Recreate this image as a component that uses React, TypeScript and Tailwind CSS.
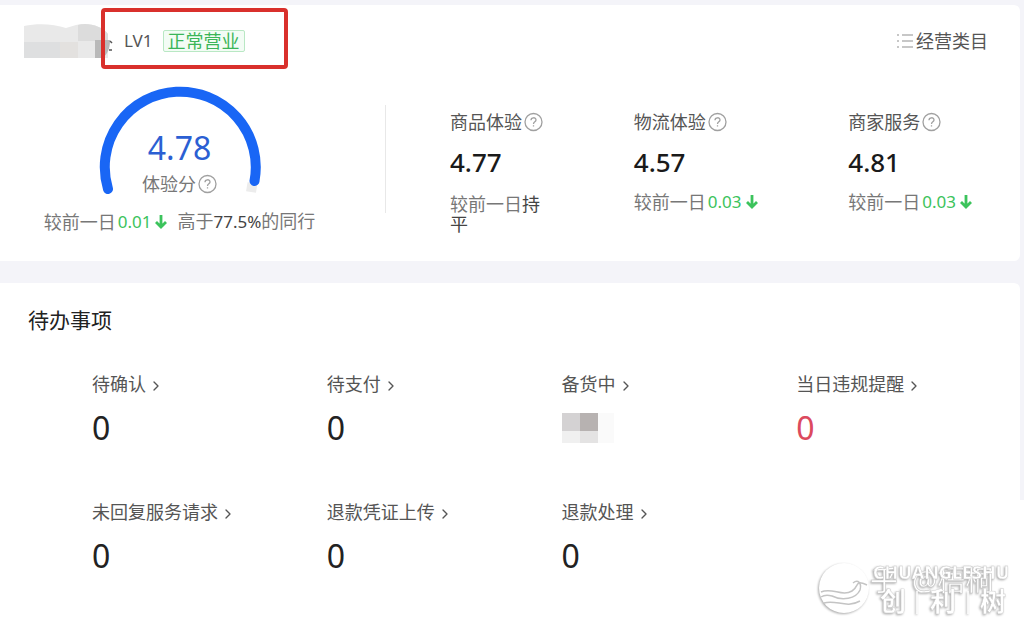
import { clsx } from "clsx"
import { ChevronRight } from "lucide-react"

type Metric = {
  label: string
  score: string
  drop?: string
}

type Todo = {
  label: string
  count: string | null
  alert?: boolean
}

const metrics: Metric[] = [
  { label: "商品体验", score: "4.77" },
  { label: "物流体验", score: "4.57", drop: "0.03" },
  { label: "商家服务", score: "4.81", drop: "0.03" },
]

// a null count is drawn as a masked value
const todos: Todo[] = [
  { label: "待确认", count: "0" },
  { label: "待支付", count: "0" },
  { label: "备货中", count: null },
  { label: "当日违规提醒", count: "0", alert: true },
  { label: "未回复服务请求", count: "0" },
  { label: "退款凭证上传", count: "0" },
  { label: "退款处理", count: "0" },
]

function Help({ label }: { label: string }) {
  return (
    <button type="button" aria-label={`${label}说明`} className="text-[#a0a0a0]">
      <svg viewBox="0 0 20 20" className="w-5 h-5" fill="none" stroke="currentColor" strokeWidth="1.3">
        <circle cx="10.500" cy="10" r="8.500" />
        <path d="M8 8.200C8 5 13 5 13 8C13 9.800 10.500 9.800 10.500 12M10.500 13.300V14.600" />
      </svg>
    </button>
  )
}

function Drop({ value }: { value: string }) {
  return (
    <span className="inline-flex items-center gap-1 ml-[2px] text-[17px] text-[#3cc35c]">
      {value}
      <svg viewBox="0 0 12 16" className="w-3 h-4" fill="none" stroke="currentColor" strokeWidth="2.800">
        <path d="M6 1V13M1 8L6 13L11 8" />
      </svg>
    </span>
  )
}

function NameMask() {
  return (
    <svg viewBox="0 0 90 34" aria-hidden="true" className="w-[90px] h-[34px]">
      <path d="M0 2C14 -1 30 0 42 4L52 1C64 -2 78 2 84 10V34H0Z" fill="#e9e9e9" />
      <path d="M0 18H36V34H0Z" fill="#dedfe0" />
      <path d="M36 18H54V34H36Z" fill="#e3e1df" />
      <path d="M54 1C64 -2 78 2 84 10V17H54Z" fill="#dcdcdc" />
      <path d="M71 16H86C86 24 84 30 78 34H71Z" fill="#b9b9b9" />
      <path d="M86 17L88 19M85 26H88" stroke="#555" strokeWidth="1.500" />
    </svg>
  )
}

function ValueMask() {
  return (
    <svg viewBox="0 0 54 30" aria-hidden="true" className="w-[54px] h-[30px]">
      <path d="M0 0H18V18H0Z" fill="#d4d2d3" />
      <path d="M18 0H36V18H18Z" fill="#b7b2b1" />
      <path d="M0 18H18V30H0Z" fill="#f0f0f0" />
      <path d="M18 18H36V30H18Z" fill="#e4e3e3" />
      <path d="M36 0H52V30H36Z" fill="#fafafa" />
    </svg>
  )
}

function Gauge() {
  return (
    <div className="relative w-[164px] h-[110px]">
      <svg viewBox="0 0 164 110" className="w-full h-full" fill="none" strokeWidth="10">
        <path d="M154.500 98L153 107" stroke="#ececec" />
        <path
          d="M10 104A75.500 75.500 0 1 1 156.500 96"
          stroke="#1966f5"
          strokeLinecap="round"
        />
      </svg>
      <div className="absolute inset-x-0 top-[43px] flex flex-col items-center">
        <span className="text-[32px] leading-10 text-[#2b5fd3]">4.78</span>
        <span className="flex items-center gap-px text-lg leading-8 text-[#777]">
          体验分
          <Help label="体验分" />
        </span>
      </div>
    </div>
  )
}

function MetricItem({ label, score, drop }: Metric) {
  return (
    <div>
      <div className="flex items-center gap-px text-lg leading-8 text-[#555]">
        {label}
        <Help label={label} />
      </div>
      <div className="mt-2 text-[26px] leading-8 font-medium text-[#1a1a1a]">{score}</div>
      {drop ? (
        <div className="flex mt-2 text-lg leading-8 text-[#777] whitespace-nowrap">
          较前一日
          <Drop value={drop} />
        </div>
      ) : (
        <div className="mt-4 w-[92px] text-lg leading-5 text-[#777]">
          较前一日<span className="text-[#444]">持平</span>
        </div>
      )}
    </div>
  )
}

function TodoItem({ label, count, alert }: Todo) {
  return (
    <li className="pl-16">
      <a href="#" className="flex items-center gap-[2px] text-lg leading-8 text-[#555]">
        {label}
        <ChevronRight size={16} strokeWidth={2} className="mt-1" />
      </a>
      <div
        className={clsx(
          "flex items-center h-10 mt-2 text-[32px] leading-10",
          alert ? "text-[#dc4a5e]" : "text-[#222]"
        )}
      >
        {count ?? <ValueMask />}
      </div>
    </li>
  )
}

function Watermark() {
  return (
    <svg
      viewBox="0 0 206 62"
      aria-hidden="true"
      className="absolute right-0 bottom-1 w-[206px] h-[62px] drop-shadow-[-1px_1px_1px_#aaa]"
    >
      <circle cx="26" cy="29" r="25" fill="#fff" />
      <g fill="none" stroke="#c4c4c4" strokeWidth="1.500">
        <path d="M3 33C14 28 24 38 34 32C42 27 36 20 49 26" />
        <path d="M35 24C40 20 44 24 42 31C38 40 24 42 14 37C10 36 6 36 3 38" />
        <path d="M6 44C18 40 28 50 42 42" />
      </g>
      <g fontSize="28" fill="#fff" stroke="#c4c4c4" strokeWidth="0.500">
        <text x="52" y="32">乎</text>
        <text x="94" y="32">@梧桐</text>
      </g>
      <g fontWeight="700" fill="#fff" stroke="#ccc" strokeWidth="0.400">
        <text x="55" y="20" fontSize="18">CHUANGLESHU</text>
        <text x="62" y="52" fontSize="26">创</text>
        <text x="112" y="52" fontSize="26">利</text>
        <text x="162" y="52" fontSize="26">树</text>
      </g>
      <path d="M99 32V55M150 32V55" stroke="#fff" strokeWidth="1.500" />
    </svg>
  )
}

export default function App() {
  return (
    <div className="relative min-h-screen flex flex-col gap-[22px] pt-[5px] pr-1 bg-[linear-gradient(#f4f4f9_80%,#fff_80%)] font-['Noto_Sans','Noto_Sans_CJK_SC',sans-serif]">
      <section className="pb-[23px] rounded-r-md bg-white">
        <header className="relative flex items-center justify-between h-[72px] pl-6 pr-8 text-lg text-[#555]">
          <div className="flex items-center gap-[10px]">
            <NameMask />
            <span className="text-[17px]">LV1</span>
            <span className="px-1 border border-[#b9e8c4] rounded-xs bg-[#f3fcf5] leading-5 text-[#3bb558]">
              正常营业
            </span>
          </div>
          <a href="#" className="flex items-center gap-[2px]">
            <svg viewBox="0 0 18 16" className="w-[18px] h-4" stroke="#b5b5b5" strokeWidth="1.500">
              <path d="M1 2H3M6 2H17M1 8H3M6 8H17M1 14H3M6 14H17" />
            </svg>
            经营类目
          </a>
          <div className="absolute left-[101px] top-[3px] w-[187px] h-[61px] border-4 border-[#d9302c] rounded-sm" />
        </header>

        <div className="flex pt-2">
          <div className="flex flex-col items-center w-[359px]">
            <Gauge />
            <p className="flex items-center mt-[10px] text-lg leading-8 text-[#777]">
              较前一日
              <Drop value="0.01" />
              <span className="ml-[10px]">
                高于<span className="text-[17px] text-[#444]">77.5%</span>的同行
              </span>
            </p>
          </div>
          <div className="mt-5 ml-[26px] h-[108px] border-l border-[#e8e8e8]" />
          <div className="grow flex justify-between items-start pt-[21px] pl-16 pr-12">
            {metrics.map((m) => (
              <MetricItem key={m.label} {...m} />
            ))}
          </div>
        </div>
      </section>

      <section className="grow pt-[21px] pl-7 pr-[53px] rounded-r-md bg-white">
        <h2 className="text-[21px] leading-8 text-[#222]">待办事项</h2>
        <ul className="grid grid-cols-4 gap-y-12 mt-8">
          {todos.map((t) => (
            <TodoItem key={t.label} {...t} />
          ))}
        </ul>
      </section>

      <Watermark />
    </div>
  )
}
